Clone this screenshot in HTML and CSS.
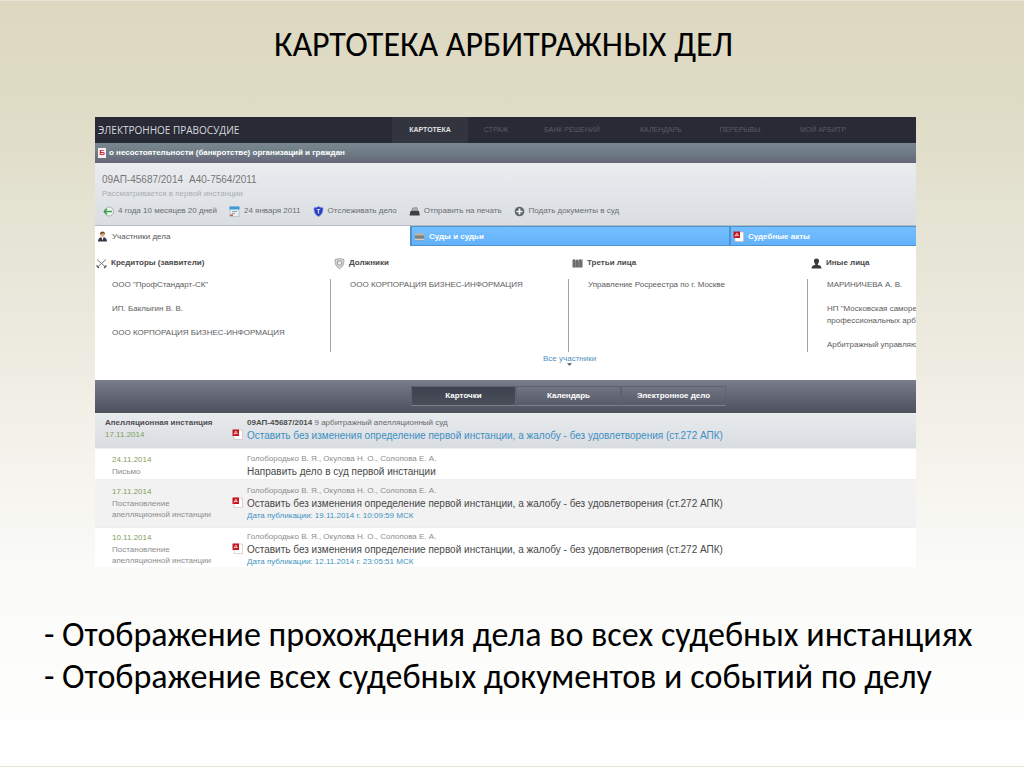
FILE: index.html
```html
<!DOCTYPE html>
<html lang="ru">
<head>
<meta charset="utf-8">
<title>Картотека арбитражных дел</title>
<link rel="stylesheet" href="styles.css">
</head>
<body>
<svg class="sprite" aria-hidden="true">
  <symbol id="pdf" viewBox="0 0 11 11">
    <path d="M2 1h8.500v9.500H2z" fill="#fff" stroke="#c9b4b4" stroke-width=".6"/>
    <rect x=".5" y=".5" width="6.500" height="6.500" fill="#c4161f"/>
    <path d="M2 5.500 3.800 2l1.700 3M2.200 4.500h3" fill="none" stroke="#fbd9d9" stroke-width=".8"/>
  </symbol>
</svg>
<main class="slide">
  <h1 class="title">КАРТОТЕКА АРБИТРАЖНЫХ ДЕЛ</h1>

  <section class="panel">
    <header class="top">
      <div class="brand">ЭЛЕКТРОННОЕ ПРАВОСУДИЕ</div>
      <nav class="nav">
        <a class="nav-link current" href="#">КАРТОТЕКА</a>
        <a class="nav-link" href="#">СТРАЖ</a>
        <a class="nav-link" href="#">БАНК РЕШЕНИЙ</a>
        <a class="nav-link" href="#">КАЛЕНДАРЬ</a>
        <a class="nav-link" href="#">ПЕРЕРЫВЫ</a>
        <a class="nav-link" href="#">МОЙ АРБИТР</a>
      </nav>
    </header>

    <div class="category">
      <span class="badge">Б</span>
      <span>о несостоятельности (банкротстве) организаций и граждан</span>
    </div>

    <div class="case">
      <div class="numbers"><span>09АП-45687/2014</span><span>А40-7564/2011</span></div>
      <div class="status">Рассматривается в первой инстанции</div>
      <div class="actions">
        <span class="action">
          <svg class="icon" viewBox="0 0 11 11"><circle cx="6" cy="5.500" r="4.500" fill="#eef6ef" stroke="#9fb8a4"/><path d="M9 5.500H1.500M4 2.800 1.300 5.500 4 8.200" fill="none" stroke="#3f9e55" stroke-width="1.400"/></svg>
          4 года 10 месяцев 20 дней</span>
        <span class="action">
          <svg class="icon" viewBox="0 0 11 11"><path d="M1 1h9v9.500H1z" fill="#e8eef3" stroke="#9fb0bd" stroke-width=".6"/><path d="M.5.500h10v3H.5z" fill="#3a9bd6"/><path d="M3 5.500h5M3 7.500h3" stroke="#8299ab" stroke-width=".9"/><path d="M1 8.500h3V10H1z" fill="#d05a4e"/></svg>
          24 января 2011</span>
        <button class="action" type="button">
          <svg class="icon" viewBox="0 0 11 11"><path d="M5.500.500c1.500 1 3 1.300 4.500 1.300 0 4-1 7-4.500 8.700C2 8.800 1 5.800 1 1.800 2.500 1.800 4 1.500 5.500.500z" fill="#2a3fc4" stroke="#7583d8" stroke-width=".6"/><path d="M3.800 3.500h3.400M5.500 3.500v4" stroke="#cfd6fa" stroke-width="1.200"/></svg>
          Отслеживать дело</button>
        <button class="action" type="button">
          <svg class="icon" viewBox="0 0 11 11"><path d="M3.500 2 8 1.500 9 5H2.500z" fill="#aaa" stroke="#777" stroke-width=".5"/><path d="M1.500 5h8.500l.8 4.500H.5z" fill="#3d4145"/></svg>
          Отправить на печать</button>
        <button class="action" type="button">
          <svg class="icon" viewBox="0 0 11 11"><circle cx="5.500" cy="5.500" r="4.800" fill="#5f666d"/><path d="M5.500 2.500v6M2.500 5.500h6" stroke="#f3f5f6" stroke-width="1.700"/></svg>
          Подать документы в суд</button>
      </div>
    </div>

    <div class="tabs" role="tablist">
      <button class="tab selected" type="button" role="tab" aria-selected="true">
        <svg class="icon" viewBox="0 0 11 11"><path d="M1 10.500C1 7.500 3 6 5.500 6s4.500 1.500 4.500 4.500z" fill="#343741"/><path d="M4.300 6h2.400L5.500 9.500z" fill="#fff"/><circle cx="5.500" cy="3.500" r="2.300" fill="#dfa878"/><path d="M3 3.200C3 1.500 4 .500 5.500.500S8 1.500 8 3.200L6.500 2.300z" fill="#6b4a2e"/></svg>
        Участники дела</button>
      <button class="tab" type="button" role="tab">
        <svg class="icon" viewBox="0 0 11 11"><path d="M1 2h9v7.500H1z" fill="#9b9a95"/><path d="M1 3h9M1 8.500h9" stroke="#d2cfc6"/><path d="M1 6h9" stroke="#66655f"/></svg>
        Суды и судьи</button>
      <button class="tab" type="button" role="tab">
        <svg class="icon"><use href="#pdf"/></svg>
        Судебные акты</button>
    </div>

    <div class="parties">
      <section class="party">
        <h2 class="party-title"><svg class="icon" viewBox="0 0 11 11"><path d="M1 1.500 9.500 9M10 1.500 1.500 9" stroke="#777" stroke-width="1"/><path d="M.5 7.500 3 10M10.500 7.500 8 10" stroke="#555" stroke-width="1.300"/></svg>Кредиторы (заявители)</h2>
        <ul class="party-list"><li>ООО "ПрофСтандарт-СК"</li><li>ИП. Баклыгин В. В.</li><li>ООО КОРПОРАЦИЯ БИЗНЕС-ИНФОРМАЦИЯ</li></ul>
      </section>
      <section class="party">
        <h2 class="party-title"><svg class="icon" viewBox="0 0 11 11"><path d="M1 1.500 5.500.500 10 1.500C10 6 9 9 5.500 10.500 2 9 1 6 1 1.500z" fill="#d5d5d5" stroke="#999" stroke-width=".8"/><circle cx="5.500" cy="5" r="2.200" fill="#eee" stroke="#888" stroke-width=".8"/></svg>Должники</h2>
        <ul class="party-list"><li>ООО КОРПОРАЦИЯ БИЗНЕС-ИНФОРМАЦИЯ</li></ul>
      </section>
      <section class="party">
        <h2 class="party-title"><svg class="icon" viewBox="0 0 11 11"><path d="M.5 2 2 1l1.500 1v1L5 1l1.500 2V2L8 1l1.300 1 1.200-1v8.500H.5z" fill="#6d6d6d"/><path d="M3.500 3v6.500M7 3v6.500" stroke="#999" stroke-width=".6"/></svg>Третьи лица</h2>
        <ul class="party-list"><li>Управление Росреестра по г. Москве</li></ul>
      </section>
      <section class="party">
        <h2 class="party-title"><svg class="icon" viewBox="0 0 11 11"><path d="M5.500.500C7.300.500 8.200 1.700 8 3.300 7.900 4.700 7.300 5.500 6.700 6v.8c2 .500 3.800 1.200 3.800 3.700H.5c0-2.500 1.800-3.200 3.800-3.700V6C3.700 5.500 3.100 4.700 3 3.300 2.800 1.700 3.700.500 5.500.500z" fill="#3a3a3a"/></svg>Иные лица</h2>
        <ul class="party-list"><li>МАРИНИЧЕВА А. В.</li><li>НП "Московская саморе<br>профессиональных арб</li><li>Арбитражный управляю</li></ul>
      </section>
      <a class="all" href="#">Все участники<svg class="arrow" viewBox="0 0 6 3"><path d="M0 0h6L3 3z" fill="#456"/></svg></a>
    </div>

    <div class="switch">
      <button class="switch-item pressed" type="button">Карточки</button>
      <button class="switch-item" type="button">Календарь</button>
      <button class="switch-item" type="button">Электронное дело</button>
    </div>

    <table class="events">
      <tbody>
        <tr class="group">
          <td class="kind"><strong>Апелляционная инстанция</strong><div class="date">17.11.2014</div></td>
          <td class="file"><svg class="icon"><use href="#pdf"/></svg></td>
          <td><div class="court"><strong>09АП-45687/2014</strong> 9 арбитражный апелляционный суд</div><a class="act" href="#">Оставить без изменения определение первой инстанции, а жалобу - без удовлетворения (ст.272 АПК)</a></td>
        </tr>
        <tr class="short">
          <td class="kind"><div class="date">24.11.2014</div><div>Письмо</div></td>
          <td class="file"></td>
          <td><div class="judges">Голобородько В. Я., Окулова Н. О., Солопова Е. А.</div><div class="act">Направить дело в суд первой инстанции</div></td>
        </tr>
        <tr class="shaded">
          <td class="kind"><div class="date">17.11.2014</div><div>Постановление<br>апелляционной инстанции</div></td>
          <td class="file"><svg class="icon"><use href="#pdf"/></svg></td>
          <td><div class="judges">Голобородько В. Я., Окулова Н. О., Солопова Е. А.</div><a class="act" href="#">Оставить без изменения определение первой инстанции, а жалобу - без удовлетворения (ст.272 АПК)</a><div class="published">Дата публикации: 19.11.2014 г. 10:09:59 МСК</div></td>
        </tr>
        <tr class="last">
          <td class="kind"><div class="date">10.11.2014</div><div>Постановление<br>апелляционной инстанции</div></td>
          <td class="file"><svg class="icon"><use href="#pdf"/></svg></td>
          <td><div class="judges">Голобородько В. Я., Окулова Н. О., Солопова Е. А.</div><a class="act" href="#">Оставить без изменения определение первой инстанции, а жалобу - без удовлетворения (ст.272 АПК)</a><div class="published">Дата публикации: 12.11.2014 г. 23:05:51 МСК</div></td>
        </tr>
      </tbody>
    </table>
  </section>

  <div class="notes">
    <p>- Отображение прохождения дела во всех судебных инстанциях</p>
    <p>- Отображение всех судебных документов и событий по делу</p>
  </div>
</main>
</body>
</html>
```
FILE: styles.css
```css
* { box-sizing: border-box; }
body { margin: 0; }
h1, h2, p, ul { margin: 0; padding: 0; font-weight: normal; }
ul { list-style: none; }
a { color: inherit; text-decoration: none; }
button { font: inherit; color: inherit; border: 0; padding: 0; background: none; cursor: pointer; }
.sprite { display: none; }

.slide {
  min-height: 100vh;
  padding: 26px 108px 24px 95px;
  border: 1px solid #e6e3d6;
  border-width: 1px 0;
  background: linear-gradient(#ddd7c1 0%, #dfddc7 15%, #e8e6d8 35%, #f2f0e8 55%, #fafaf7 74%, #fff 100%);
  color: #000;
  font-family: Carlito, Calibri, "Open Sans", sans-serif;
}
.title { padding-right: 4px; font-size: 34px; line-height: 36px; margin-bottom: 54px; text-align: center; white-space: nowrap; }

.panel { background: #fff; color: #666; font: 8px/12px "Liberation Sans", Arial, sans-serif; overflow: hidden; }
.icon { width: 11px; height: 11px; flex: none; display: block; }

.top { display: flex; height: 26px; background: #282a35; }
.brand { width: 297px; padding-left: 3px; color: #d8d9de; font: 10px/26px "Open Sans", sans-serif; white-space: nowrap; }
.nav { display: grid; grid-template-columns: 76px 56px 96px 82px 76px 90px; font-size: 7px; line-height: 26px; text-align: center; color: #5a5c67; }
.current { background: #32343e; color: #e2e2e5; font-weight: bold; }

.category { display: flex; align-items: center; gap: 3px; height: 20px; padding-left: 3px; background: linear-gradient(#7a8790, #6f7d86 45%, #666579); color: #fff; font-weight: bold; }
.badge { width: 8px; height: 10px; background: #fbeef0; color: #c22a3c; line-height: 10px; text-align: center; }

.case { height: 63px; padding: 10px 7px 0; background: linear-gradient(#e9edf0, #dadee2); border-bottom: 1px solid #b4bac0; }
.numbers { display: flex; gap: 6px; font-size: 10px; line-height: 13px; color: #777; }
.status { line-height: 15px; color: #a9adb0; }
.actions { display: flex; gap: 12px; padding: 4px 0 0 1px; color: #6a6d70; }
.action { display: flex; align-items: center; gap: 4px; line-height: 12px; white-space: nowrap; }

.tabs { display: grid; grid-template-columns: 315fr 319fr 187fr; height: 20px; }
.tab { display: flex; align-items: center; gap: 4px; padding: 1px 0 0 2px; border: 1px solid #4b93cf; border-right: 0; border-left-width: 2px; background: linear-gradient(#75bfff, #62b1fa); color: #fff; font-weight: bold; }
.selected { border: 0; background: #fff; color: #555; font-weight: normal; }

.parties { display: grid; grid-template-columns: 235fr 238fr 239fr 109fr; grid-template-rows: 98px 14px; height: 134px; padding-top: 11px; white-space: nowrap; }
.party { overflow: hidden; }
.party-title { display: flex; align-items: center; gap: 4px; height: 12px; padding-left: 4px; font-size: 8px; font-weight: bold; color: #4a4a4a; }
.party:first-child .party-title { padding-left: 1px; }
.party-list { display: grid; gap: 12px; align-content: start; height: 73px; margin-top: 10px; padding-left: 19px; border-left: 1px solid #a5a5a5; color: #5c5c5c; }
.party:first-child .party-list { padding-left: 16px; border-left-color: transparent; }
.all { grid-column: 1 / -1; margin-right: auto; padding-left: 448px; color: #4f8fc0; line-height: 8px; }
.arrow { display: block; width: 5px; height: 3px; margin: 0 auto; }

.switch { display: flex; height: 33px; padding: 6px 0 7px 316px; background: linear-gradient(#7a7d8b, #4c505d); color: #fff; font-weight: bold; }
.switch-item { width: 105px; border: 1px solid #5f6371; border-bottom-color: #7c808c; }
.pressed { background: linear-gradient(#3e424e, #4a4e59); }

.events { width: 100%; border-collapse: separate; border-spacing: 0; line-height: 12px; color: #8c8c8c; }
.events td { padding: 4px 0 1px; vertical-align: top; border-top: 1px solid #eee; }
.events .kind { width: 137px; padding-left: 17px; line-height: 11px; }
.kind .date { line-height: 13px; color: #83a05c; }
.events .file { width: 15px; }
.file .icon { margin-top: 12px; }
.events .act { display: block; font-size: 10px; line-height: 13px; color: #484848; }
.published { line-height: 11px; color: #4193c2; }
.court { color: #6a6a6a; }
.group { background: linear-gradient(#e8ebee, #d9dde1); }
.events .group .kind { padding-left: 10px; }
.group strong { color: #4f4f4f; }
.events .group .act { color: #3e8fc2; }
.events .group td { padding: 3px 0 6px; }
.shaded { background: #f2f2f2; }
.events .shaded td { padding-top: 5px; padding-bottom: 6px; }
.events .last td { padding-top: 3px; padding-bottom: 0; }

.notes { margin: 47px -90px 0 -51px; font-size: 34px; line-height: 42px; white-space: nowrap; }
```
